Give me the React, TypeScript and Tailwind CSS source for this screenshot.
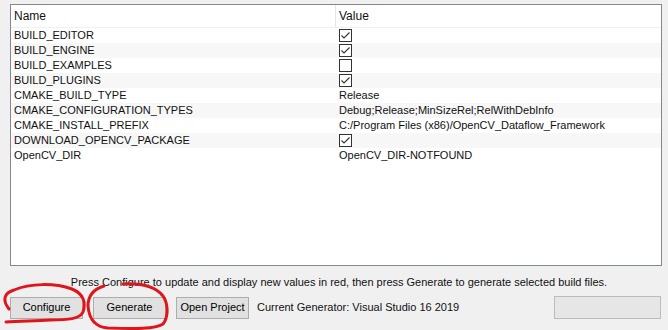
import React from "react";

type Row = { name: string; value: string | boolean };

const rows: Row[] = [
  { name: "BUILD_EDITOR", value: true },
  { name: "BUILD_ENGINE", value: true },
  { name: "BUILD_EXAMPLES", value: false },
  { name: "BUILD_PLUGINS", value: true },
  { name: "CMAKE_BUILD_TYPE", value: "Release" },
  { name: "CMAKE_CONFIGURATION_TYPES", value: "Debug;Release;MinSizeRel;RelWithDebInfo" },
  { name: "CMAKE_INSTALL_PREFIX", value: "C:/Program Files (x86)/OpenCV_Dataflow_Framework" },
  { name: "DOWNLOAD_OPENCV_PACKAGE", value: true },
  { name: "OpenCV_DIR", value: "OpenCV_DIR-NOTFOUND" },
];

function Check({ on }: { on: boolean }) {
  return (
    <svg width="13" height="13" viewBox="0 0 13 13" className="block">
      <rect x="0.5" y="0.5" width="12" height="12" fill="#fff" stroke="#333" />
      {on && <path d="M2.5 6.5 L5 9 L10.5 3.5" fill="none" stroke="#333" strokeWidth="1.1" />}
    </svg>
  );
}

function Btn({ label, w }: { label: string; w: string }) {
  return (
    <div
      className={`${w} h-[22px] flex items-center justify-center bg-[#e1e1e1] border border-[#adadad] text-[#000]`}
    >
      {label}
    </div>
  );
}

export default function App() {
  return (
    <div
      className="relative w-[668px] h-[330px] bg-[#f0f0f0] text-[11px] text-[#111] overflow-hidden"
      style={{ fontFamily: '"Liberation Sans", Arial, sans-serif' }}
    >
      <div className="pt-[4px] pl-[10px] pr-[6px]">
        <div className="h-[262px] bg-white border border-[#828790]">
          {/* header */}
          <div className="flex h-[23px] items-center border-b border-[#f0f0f0] text-[12px]">
            <div className="w-[325px] pl-[3px] border-r border-[#e5e5e5] h-full flex items-center">Name</div>
            <div className="pl-[3px]">Value</div>
          </div>
          {rows.map((r, i) => (
            <div
              key={r.name}
              className={`flex h-[15px] items-center ${i % 2 === 1 ? "bg-[#f7f7f7]" : "bg-white"}`}
            >
              <div className="w-[326px] pl-[3px] whitespace-nowrap">{r.name}</div>
              <div className="pl-[2px] whitespace-nowrap">
                {typeof r.value === "boolean" ? <Check on={r.value} /> : r.value}
              </div>
            </div>
          ))}
        </div>
      </div>

      <div className="h-[30px] flex items-center justify-center pl-[10px] pt-[2px]">
        Press Configure to update and display new values in red, then press Generate to generate selected build files.
      </div>

      <div className="flex items-center pl-[10px] pr-[7px] gap-[10px]">
        <Btn label="Configure" w="w-[73px]" />
        <Btn label="Generate" w="w-[73px]" />
        <Btn label="Open Project" w="w-[73px]" />
        <div className="-ml-[2px]">Current Generator: Visual Studio 16 2019</div>
        <div className="ml-auto w-[107px] h-[23px] bg-[#e6e6e6] border border-[#bcbcbc]" />
      </div>

      {/* hand-drawn annotations */}
      <svg className="absolute inset-0 pointer-events-none" width="668" height="330" viewBox="0 0 668 330">
        <path
          d="M9 309 C2 300 4 293 14 290 C30 283 55 283 72 289 C84 294 86 303 83 312 C80 319 68 320 50 320 C35 321 20 321 6 322"
          fill="none"
          stroke="#e0141b"
          strokeWidth="3"
          strokeLinecap="round"
        />
        <path
          d="M123 284 C140 283 155 286 163 296 C169 305 168 318 163 324 C155 329 135 329 108 328 C94 327 89 318 88 306 C88 296 94 289 104 286"
          fill="none"
          stroke="#e0141b"
          strokeWidth="3"
          strokeLinecap="round"
        />
      </svg>
    </div>
  );
}
